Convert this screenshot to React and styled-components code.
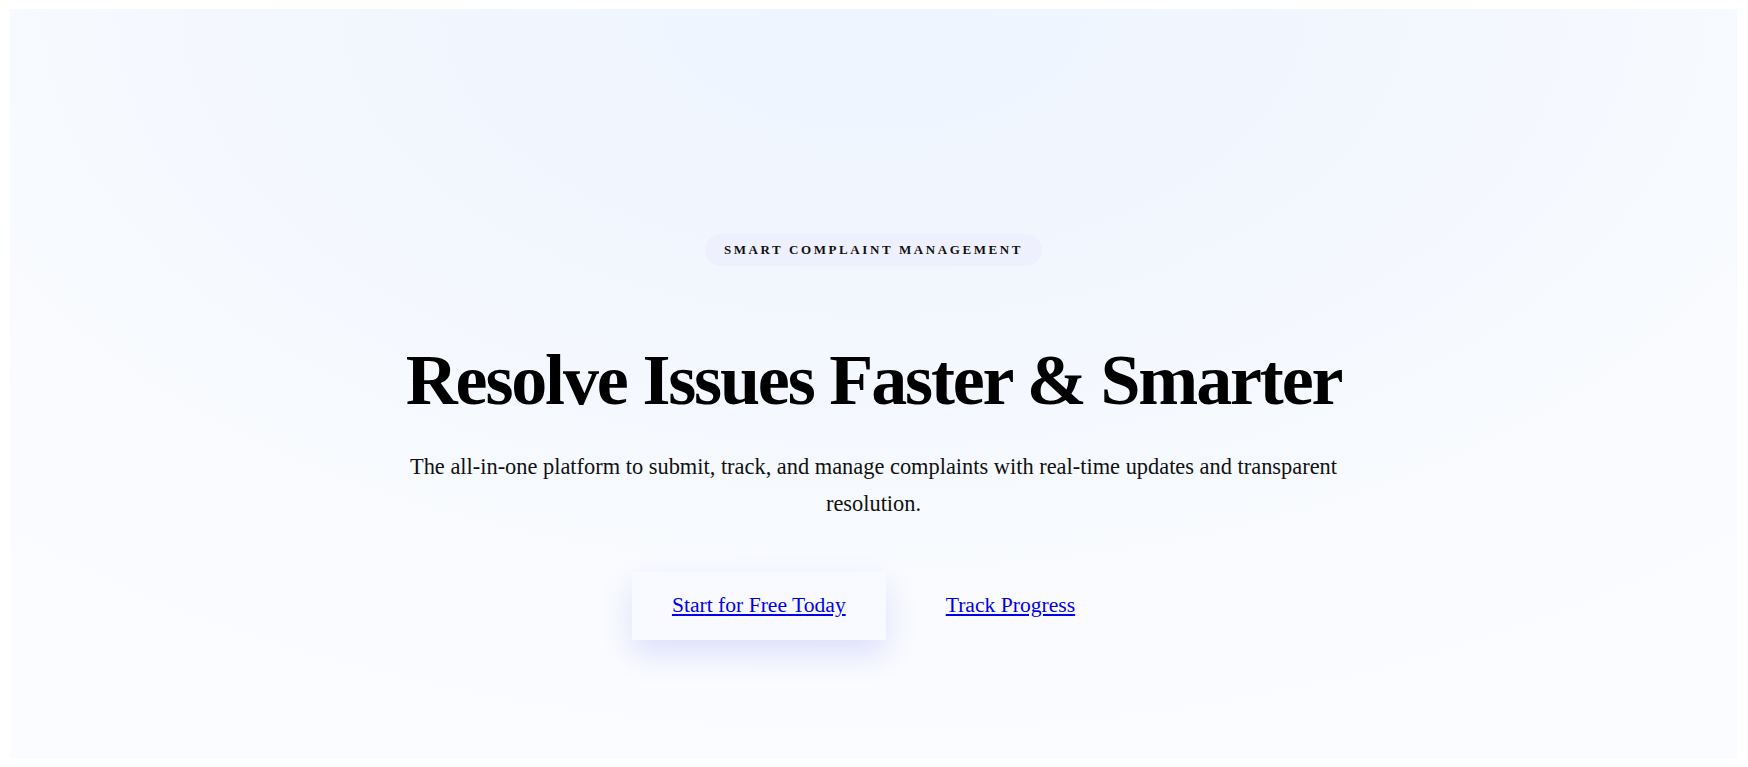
import React from "react";
import styled, { createGlobalStyle } from "styled-components";

const GlobalStyle = createGlobalStyle`
  html, body { margin: 0; padding: 0; background: #ffffff; }
  body { font-family: "Liberation Serif", "Times New Roman", serif; color: #000; }
`;

const Page = styled.div`
  padding: 9px 11px 8px 10px;
`;

const Hero = styled.section`
  min-height: 750px;
  box-sizing: border-box;
  padding: 225px 24px 80px;
  display: flex;
  flex-direction: column;
  align-items: center;
  text-align: center;
  background: radial-gradient(
    ellipse 75% 100% at 50% 0%,
    #eef5ff 0%,
    #f3f7fe 45%,
    #f9fbfe 80%,
    #fbfcff 100%
  );
`;

const Badge = styled.span`
  display: inline-block;
  padding: 8px 19px 9px;
  border-radius: 999px;
  background: #eef1fd;
  font-size: 13px;
  line-height: 15px;
  font-weight: 700;
  letter-spacing: 0.2em;
  text-transform: uppercase;
  color: #111;
`;

const Title = styled.h1`
  margin: 74px 0 0;
  font-size: 72px;
  line-height: 80px;
  font-weight: 700;
  letter-spacing: -0.03em;
  color: #000;
`;

const Lead = styled.p`
  margin: 28px 0 0;
  max-width: 940px;
  font-size: 22.4px;
  line-height: 37px;
  color: #111;
`;

const Actions = styled.div`
  margin-top: 50px;
  display: flex;
  align-items: center;
  gap: 20px;
`;

const ActionLink = styled.a`
  display: inline-block;
  padding: 21px 40px 22px;
  font-size: 21.6px;
  line-height: 25px;
  color: #0000ee;
  text-decoration: underline;
  background: ${(p) => (p.$primary ? "#f8faff" : "transparent")};
  box-shadow: ${(p) =>
    p.$primary ? "0 14px 30px rgba(99, 102, 241, 0.18)" : "none"};
`;

export default function App() {
  return (
    <>
      <GlobalStyle />
      <Page>
        <Hero>
          <Badge>Smart Complaint Management</Badge>
          <Title>Resolve Issues Faster &amp; Smarter</Title>
          <Lead>
            The all-in-one platform to submit, track, and manage complaints
            with real-time updates and transparent resolution.
          </Lead>
          <Actions>
            <ActionLink href="#" $primary>
              Start for Free Today
            </ActionLink>
            <ActionLink href="#">Track Progress</ActionLink>
          </Actions>
        </Hero>
      </Page>
    </>
  );
}
